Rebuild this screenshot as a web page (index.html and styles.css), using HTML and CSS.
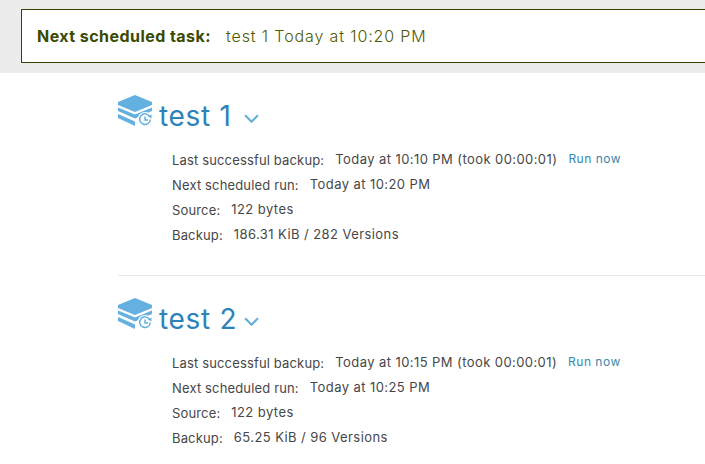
FILE: index.html
```html
<!DOCTYPE html>
<html lang="en">
<head>
<meta charset="utf-8">
<title>Backups</title>
<link rel="stylesheet" href="styles.css">
</head>
<body>
<header class="banner">
  <div class="notice"><strong class="notice-label">Next scheduled task:</strong><span class="notice-text">test 1 Today at 10:20 PM</span></div>
</header>
<main class="list">
  <section class="task">
    <h2 class="task-title">
      <svg class="stack" viewBox="0 0 34 32"><path class="fill" d="M17 0 34 7V10L17 17 0 10V7Z"/><path class="fill" d="M0 12.500 17 19.500 34 12.500V16L17 23.500 0 16Z"/><path class="fill" d="M0 19 17 26.500V31L0 23Z"/><circle class="halo" cx="27" cy="24.500" r="7.500"/><path class="clock" d="M31.600 21.500A5.300 5.300 0 1 0 32.300 24.500"/><path class="clock" d="M27 21.500V25H30"/><path class="fill" d="M30 21.500 33.500 19.500 33.500 23.500Z"/></svg>
      <span class="task-name">test 1</span>
      <svg class="chev" viewBox="0 0 14 8"><path d="M1 1 7 7 13 1"/></svg>
    </h2>
    <ul class="facts">
      <li><span class="k">Last successful backup:</span><span class="v">Today at 10:10 PM (took 00:00:01)</span><a class="run" href="#">Run now</a></li>
      <li><span class="k">Next scheduled run:</span><span class="v">Today at 10:20 PM</span></li>
      <li><span class="k">Source:</span><span class="v">122 bytes</span></li>
      <li><span class="k">Backup:</span><span class="v">186.31 KiB / 282 Versions</span></li>
    </ul>
  </section>
  <section class="task">
    <h2 class="task-title">
      <svg class="stack" viewBox="0 0 34 32"><path class="fill" d="M17 0 34 7V10L17 17 0 10V7Z"/><path class="fill" d="M0 12.500 17 19.500 34 12.500V16L17 23.500 0 16Z"/><path class="fill" d="M0 19 17 26.500V31L0 23Z"/><circle class="halo" cx="27" cy="24.500" r="7.500"/><path class="clock" d="M31.600 21.500A5.300 5.300 0 1 0 32.300 24.500"/><path class="clock" d="M27 21.500V25H30"/><path class="fill" d="M30 21.500 33.500 19.500 33.500 23.500Z"/></svg>
      <span class="task-name">test 2</span>
      <svg class="chev" viewBox="0 0 14 8"><path d="M1 1 7 7 13 1"/></svg>
    </h2>
    <ul class="facts">
      <li><span class="k">Last successful backup:</span><span class="v">Today at 10:15 PM (took 00:00:01)</span><a class="run" href="#">Run now</a></li>
      <li><span class="k">Next scheduled run:</span><span class="v">Today at 10:25 PM</span></li>
      <li><span class="k">Source:</span><span class="v">122 bytes</span></li>
      <li><span class="k">Backup:</span><span class="v">65.25 KiB / 96 Versions</span></li>
    </ul>
  </section>
</main>
</body>
</html>
```
FILE: styles.css
```css
html, body { margin: 0; padding: 0; }
body {
  width: 705px;
  height: 464px;
  overflow: hidden;
  background: #fff;
  font-family: Inter, sans-serif;
  color: #474747;
}
.banner {
  height: 73px;
  box-sizing: border-box;
  padding: 9px 0 0 21px;
  background: #ececec;
}
.notice {
  height: 54px;
  box-sizing: border-box;
  display: flex;
  align-items: center;
  padding-left: 15px;
  padding-bottom: 1px;
  background: #fff;
  border: 1px solid #334400;
  border-right: 0;
  font-size: 16px;
  color: #4e5a00;
}
.notice-label { font-weight: 700; color: #3a4a00; margin-right: 15px; letter-spacing: 0.45px; }
.notice-text { letter-spacing: 0.87px; font-weight: 300; }
.list { margin-left: 118px; padding-top: 23px; }
.task { box-sizing: border-box; }
.task:first-child { height: 180px; border-bottom: 1px solid #e8e8e8; }
.task + .task { padding-top: 23px; }
.task-title {
  display: flex;
  align-items: center;
  margin: 0;
  height: 40px;
  font-size: 28px;
  font-weight: 400;
  letter-spacing: 0.7px;
  color: #2b83ba;
}
.stack { width: 34px; height: 32px; margin-top: -11px; }
.fill { fill: #64b0e0; }
.halo { fill: #fff; }
.clock { fill: none; stroke: #64b0e0; stroke-width: 1.500; }
.task-name { margin-left: 7px; width: 75px; white-space: nowrap; }
.chev { width: 15px; height: 9px; margin-left: 10px; margin-top: 4px; fill: none; stroke: #64aed9; stroke-width: 2; }
.facts { list-style: none; margin: 11px 0 0 54px; padding: 0; font-size: 13px; }
.facts li { display: flex; height: 25px; align-items: center; white-space: nowrap; }
.k { margin-right: 11px; letter-spacing: 0.15px; }
.v { position: relative; top: -1px; letter-spacing: 0.42px; }
.run { margin-left: 11px; color: #3a87ad; text-decoration: none; position: relative; top: -1px; font-size: 12px; letter-spacing: 0.5px; }
```
